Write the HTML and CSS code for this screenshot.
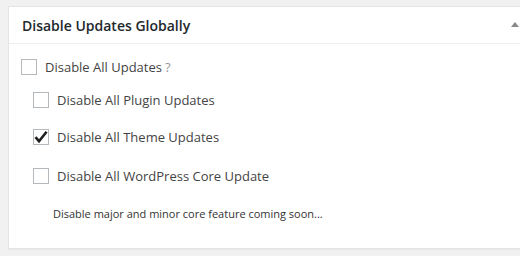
FILE: index.html
```html
<!DOCTYPE html>
<html lang="en">
<head>
    <meta charset="UTF-8">
    <title>Disable Updates</title>
    <link rel="stylesheet" href="styles.css">
</head>
<body>
    <div class="postbox">
        <div class="postbox-header">
            <h2>Disable Updates Globally</h2>
            <span class="toggle-arrow"></span>
        </div>
        <div class="inside">
            <label class="option main">
                <span class="box"></span>
                <span>Disable All Updates</span><span class="help">?</span>
            </label>
            <div class="sub-options">
                <label class="option first">
                    <span class="box"></span>
                    <span>Disable All Plugin Updates</span>
                </label>
                <label class="option">
                    <span class="box checked">
                        <svg width="16" height="16" viewBox="0 0 16 16"><path d="M2.5 8.2 L6 12.2 L13.6 2.8" fill="none" stroke="#1e1e1e" stroke-width="2.6"/></svg>
                    </span>
                    <span>Disable All Theme Updates</span>
                </label>
                <label class="option last">
                    <span class="box"></span>
                    <span>Disable All WordPress Core Update</span>
                </label>
                <p class="note">Disable major and minor core feature coming soon...</p>
            </div>
        </div>
    </div>
</body>
</html>
```

FILE: styles.css
```css
html, body {
    margin: 0;
    overflow: hidden;
}
body {
    background: #f1f1f1;
    font-family: "Open Sans", sans-serif;
    color: #444;
    padding: 6px 0 0 8px;
    height: 250px;
}
.postbox {
    width: 511px;
    height: 241px;
    background: #fff;
    border: 1px solid #e5e5e5;
    border-right: none;
    box-shadow: 0 1px 1px rgba(0,0,0,0.04);
}
.postbox-header {
    display: flex;
    align-items: center;
    height: 36px;
    border-bottom: 1px solid #eee;
    padding-left: 13px;
}
.postbox-header h2 {
    margin: 0;
    font-size: 14px;
    font-weight: 600;
    color: #23282d;
}
.toggle-arrow {
    margin-left: auto;
    margin-right: 1px;
    margin-top: -1px;
    width: 0;
    height: 0;
    border-left: 4px solid transparent;
    border-right: 4px solid transparent;
    border-bottom: 5px solid #888;
}
.inside {
    padding: 15px 0 0 12px;
}
.option {
    display: flex;
    align-items: center;
    font-size: 13px;
    height: 16px;
}
.box {
    width: 14px;
    height: 14px;
    border: 1px solid #b4b9be;
    background: #fff;
    margin-right: 8px;
    flex-shrink: 0;
    position: relative;
}
.box svg {
    position: absolute;
    left: -1px;
    top: -1px;
}
.help {
    color: #999;
    margin-left: 3px;
}
.sub-options {
    padding-left: 12px;
}
.sub-options .option {
    margin-top: 21px;
}
.sub-options .option.first {
    margin-top: 17px;
}
.sub-options .option.last {
    margin-top: 23px;
}
.note {
    font-size: 11px;
    color: #333;
    margin: 22px 0 0 20px;
}
```
